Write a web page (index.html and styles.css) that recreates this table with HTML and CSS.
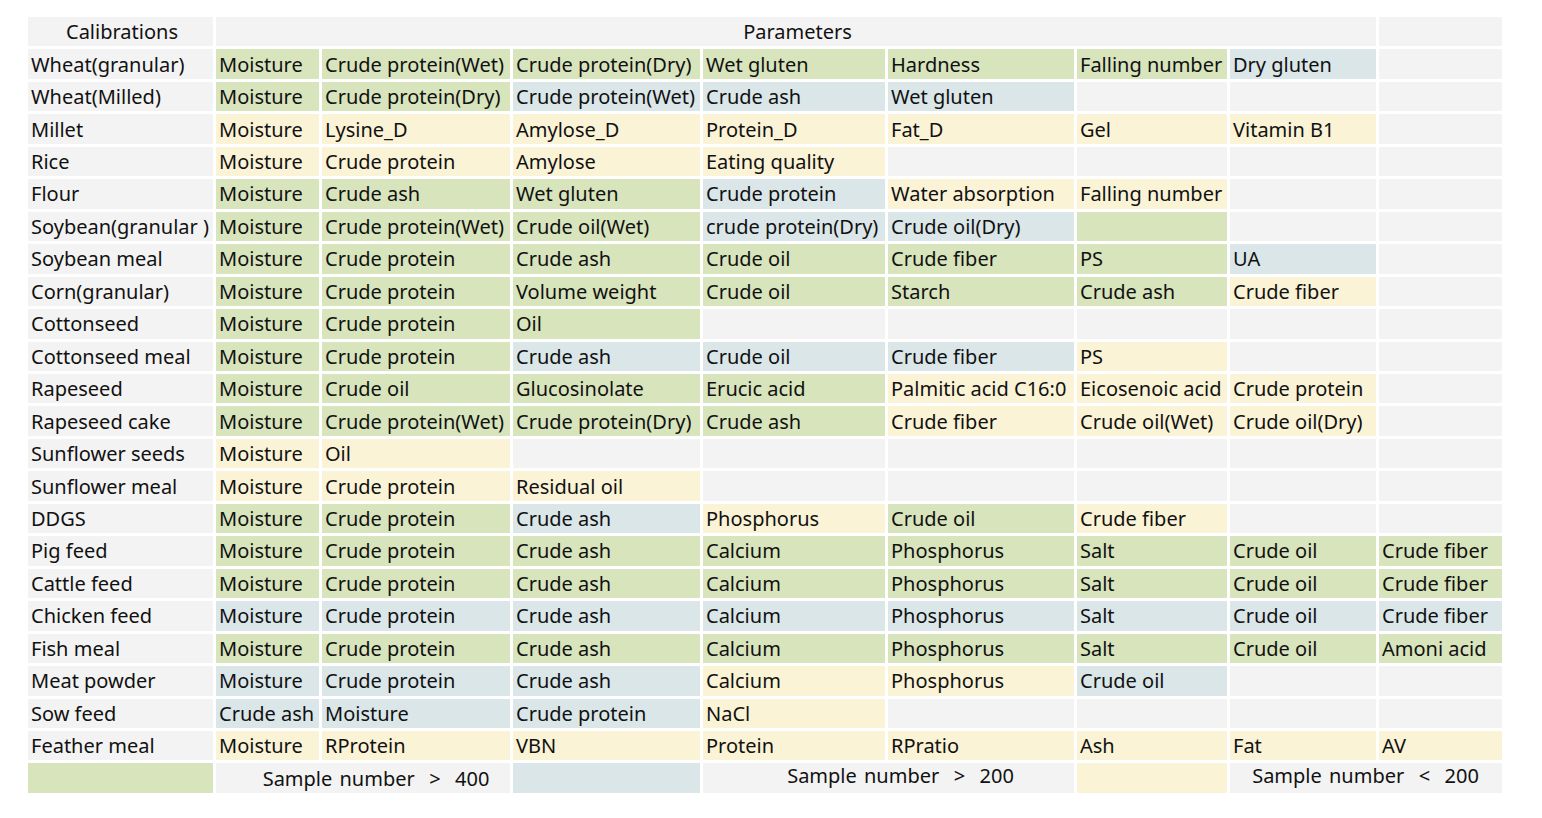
FILE: index.html
```html
<!DOCTYPE html>
<html lang="en">
<head>
<meta charset="utf-8">
<title>Calibrations</title>
<link rel="stylesheet" href="styles.css">
</head>
<body>
<table class="cal">
<colgroup>
<col class="c0"><col class="c1"><col class="c2"><col class="c3"><col class="c4"><col class="c5"><col class="c6"><col class="c7"><col class="c8">
</colgroup>
<thead>
<tr><th class="center">Calibrations</th><th colspan="7" class="center">Parameters</th><th></th></tr>
</thead>
<tbody>
<tr><td>Wheat(granular)</td><td class="g">Moisture</td><td class="g">Crude protein(Wet)</td><td class="g">Crude protein(Dry)</td><td class="g">Wet gluten</td><td class="g">Hardness</td><td class="g">Falling number</td><td class="b">Dry gluten</td><td></td></tr>
<tr><td>Wheat(Milled)</td><td class="g">Moisture</td><td class="g">Crude protein(Dry)</td><td class="b">Crude protein(Wet)</td><td class="b">Crude ash</td><td class="b">Wet gluten</td><td></td><td></td><td></td></tr>
<tr><td>Millet</td><td class="y">Moisture</td><td class="y">Lysine_D</td><td class="y">Amylose_D</td><td class="y">Protein_D</td><td class="y">Fat_D</td><td class="y">Gel</td><td class="y">Vitamin B1</td><td></td></tr>
<tr><td>Rice</td><td class="y">Moisture</td><td class="y">Crude protein</td><td class="y">Amylose</td><td class="y">Eating quality</td><td></td><td></td><td></td><td></td></tr>
<tr><td>Flour</td><td class="g">Moisture</td><td class="g">Crude ash</td><td class="g">Wet gluten</td><td class="b">Crude protein</td><td class="y">Water absorption</td><td class="y">Falling number</td><td></td><td></td></tr>
<tr><td>Soybean(granular )</td><td class="g">Moisture</td><td class="g">Crude protein(Wet)</td><td class="g">Crude oil(Wet)</td><td class="b">crude protein(Dry)</td><td class="b">Crude oil(Dry)</td><td class="g"></td><td></td><td></td></tr>
<tr><td>Soybean meal</td><td class="g">Moisture</td><td class="g">Crude protein</td><td class="g">Crude ash</td><td class="g">Crude oil</td><td class="g">Crude fiber</td><td class="g">PS</td><td class="b">UA</td><td></td></tr>
<tr><td>Corn(granular)</td><td class="g">Moisture</td><td class="g">Crude protein</td><td class="g">Volume weight</td><td class="g">Crude oil</td><td class="g">Starch</td><td class="g">Crude ash</td><td class="y">Crude fiber</td><td></td></tr>
<tr><td>Cottonseed</td><td class="g">Moisture</td><td class="g">Crude protein</td><td class="g">Oil</td><td></td><td></td><td></td><td></td><td></td></tr>
<tr><td>Cottonseed meal</td><td class="g">Moisture</td><td class="g">Crude protein</td><td class="b">Crude ash</td><td class="b">Crude oil</td><td class="b">Crude fiber</td><td class="y">PS</td><td></td><td></td></tr>
<tr><td>Rapeseed</td><td class="g">Moisture</td><td class="g">Crude oil</td><td class="g">Glucosinolate</td><td class="g">Erucic acid</td><td class="y">Palmitic acid C16:0</td><td class="y">Eicosenoic acid</td><td class="y">Crude protein</td><td></td></tr>
<tr><td>Rapeseed cake</td><td class="g">Moisture</td><td class="g">Crude protein(Wet)</td><td class="g">Crude protein(Dry)</td><td class="g">Crude ash</td><td class="y">Crude fiber</td><td class="y">Crude oil(Wet)</td><td class="y">Crude oil(Dry)</td><td></td></tr>
<tr><td>Sunflower seeds</td><td class="y">Moisture</td><td class="y">Oil</td><td></td><td></td><td></td><td></td><td></td><td></td></tr>
<tr><td>Sunflower meal</td><td class="y">Moisture</td><td class="y">Crude protein</td><td class="y">Residual oil</td><td></td><td></td><td></td><td></td><td></td></tr>
<tr><td>DDGS</td><td class="g">Moisture</td><td class="g">Crude protein</td><td class="b">Crude ash</td><td class="y">Phosphorus</td><td class="g">Crude oil</td><td class="y">Crude fiber</td><td></td><td></td></tr>
<tr><td>Pig feed</td><td class="g">Moisture</td><td class="g">Crude protein</td><td class="g">Crude ash</td><td class="g">Calcium</td><td class="g">Phosphorus</td><td class="g">Salt</td><td class="g">Crude oil</td><td class="g">Crude fiber</td></tr>
<tr><td>Cattle feed</td><td class="g">Moisture</td><td class="g">Crude protein</td><td class="g">Crude ash</td><td class="g">Calcium</td><td class="g">Phosphorus</td><td class="g">Salt</td><td class="g">Crude oil</td><td class="g">Crude fiber</td></tr>
<tr><td>Chicken feed</td><td class="b">Moisture</td><td class="b">Crude protein</td><td class="b">Crude ash</td><td class="b">Calcium</td><td class="b">Phosphorus</td><td class="b">Salt</td><td class="b">Crude oil</td><td class="b">Crude fiber</td></tr>
<tr><td>Fish meal</td><td class="g">Moisture</td><td class="g">Crude protein</td><td class="g">Crude ash</td><td class="g">Calcium</td><td class="g">Phosphorus</td><td class="g">Salt</td><td class="g">Crude oil</td><td class="g">Amoni acid</td></tr>
<tr><td>Meat powder</td><td class="b">Moisture</td><td class="b">Crude protein</td><td class="b">Crude ash</td><td class="y">Calcium</td><td class="y">Phosphorus</td><td class="b">Crude oil</td><td></td><td></td></tr>
<tr><td>Sow feed</td><td class="b">Crude ash</td><td class="b">Moisture</td><td class="b">Crude protein</td><td class="y">NaCl</td><td></td><td></td><td></td><td></td></tr>
<tr><td>Feather meal</td><td class="y">Moisture</td><td class="y">RProtein</td><td class="y">VBN</td><td class="y">Protein</td><td class="y">RPratio</td><td class="y">Ash</td><td class="y">Fat</td><td class="y">AV</td></tr>
<tr class="legend"><td class="g"></td><td colspan="2" class="center s1">Sample number  &gt;  400</td><td class="b"></td><td colspan="2" class="center up s2">Sample number  &gt;  200</td><td class="y"></td><td colspan="2" class="center up s3">Sample number  &lt;  200</td></tr>
</tbody>
</table>
</body>
</html>
```

FILE: styles.css
```css
html, body {
  margin: 0;
  padding: 0;
  background: #ffffff;
}

body {
  padding: 14px 0 0 25px;
  font-family: "Noto Sans", "Open Sans", sans-serif;
  font-size: 20px;
  color: #111111;
}

.cal {
  border-collapse: separate;
  border-spacing: 3px;
  table-layout: fixed;
  width: 1480px;
}

.c0 { width: 185px; }
.c1 { width: 103px; }
.c2 { width: 188px; }
.c3 { width: 187px; }
.c4 { width: 182px; }
.c5 { width: 186px; }
.c6 { width: 150px; }
.c7 { width: 146px; }
.c8 { width: 123px; }

.cal th,
.cal td {
  height: 28.46px;
  padding: 1px 0 0 3px;
  background: #f3f3f3;
  font-weight: normal;
  text-align: left;
  vertical-align: middle;
  white-space: nowrap;
  overflow: hidden;
  line-height: 28px;
}

.cal td.g { background: #d8e4bc; }
.cal td.b { background: #dae6e8; }
.cal td.y { background: #fbf3d6; }

.cal .center {
  text-align: center;
}

.legend td {
  white-space: pre;
  word-spacing: 2px;
  overflow: visible;
}

.legend td.s1 {
  padding-left: 26px;
}

.legend td.s2 {
  padding-left: 24px;
}

.legend td.s3 {
  padding-right: 4px;
}

.legend td.up {
  height: 24.46px;
  padding-top: 0;
  padding-bottom: 5px;
  line-height: 24px;
}
```
